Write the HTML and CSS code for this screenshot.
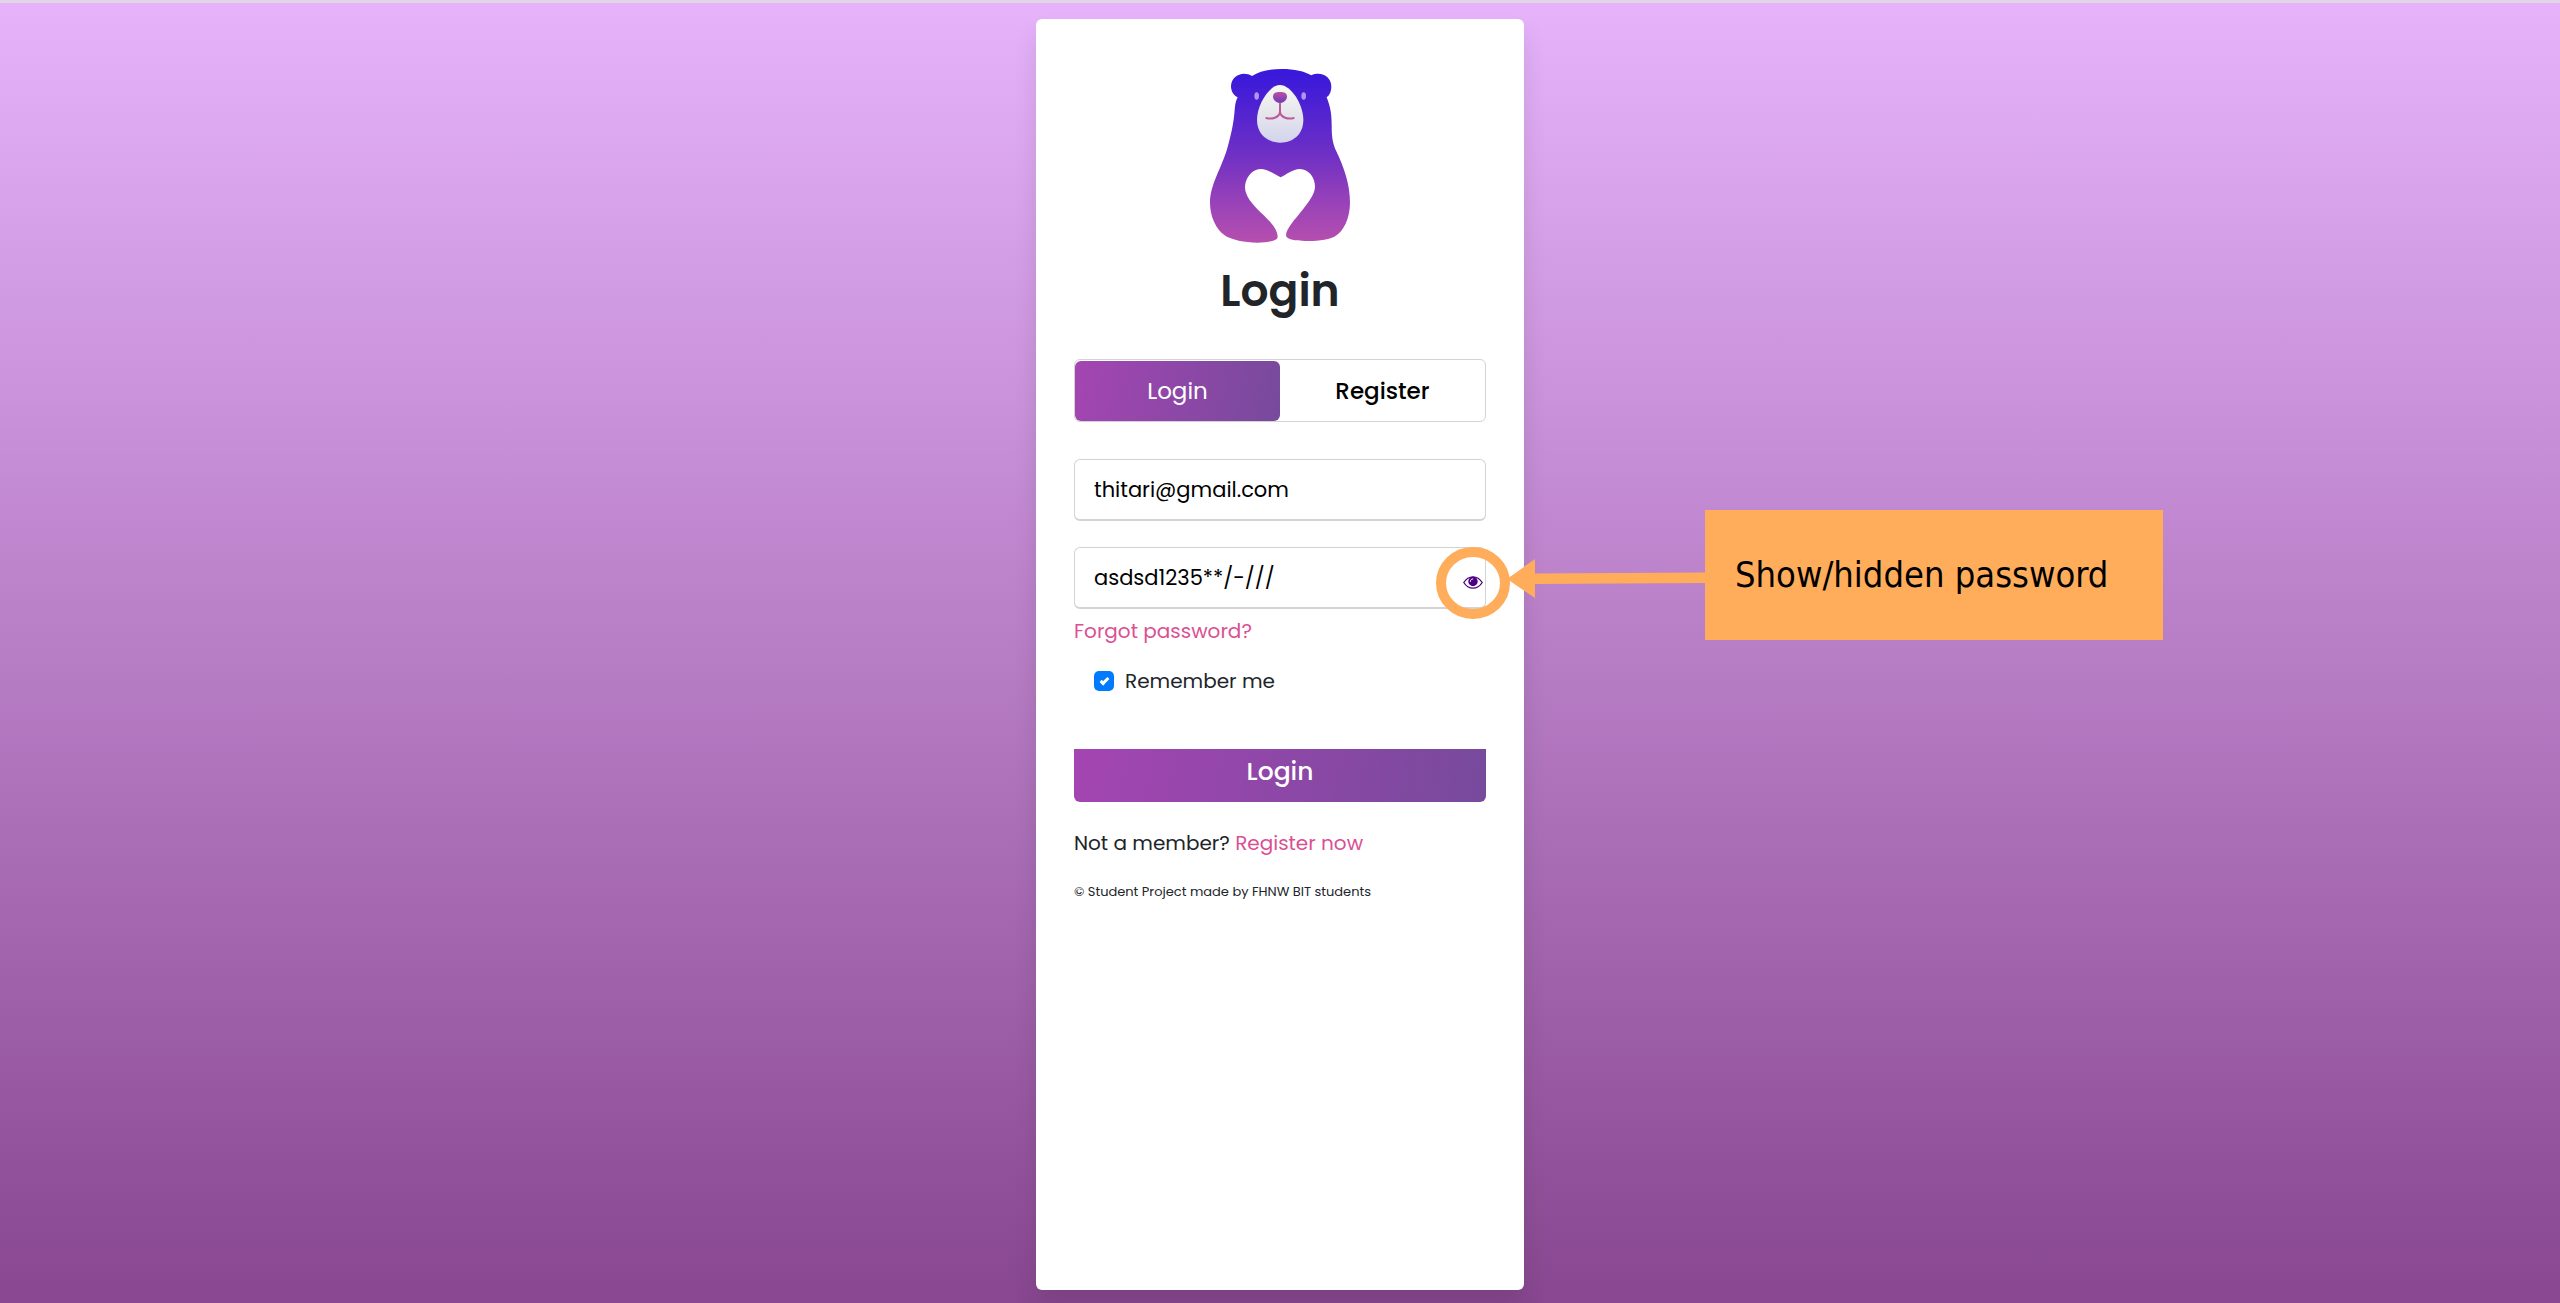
FILE: index.html
```html
<!DOCTYPE html>
<html lang="en">
<head>
<meta charset="utf-8">
<meta name="viewport" content="width=device-width, initial-scale=1">
<title>Login</title>
<link rel="stylesheet" href="styles.css">
</head>
<body>
<main class="page">
  <section class="card">
    <svg class="logo" viewBox="90 57 420 522" role="img" aria-label="Bear logo">
      <defs>
        <linearGradient id="fur" x1="0" y1="57" x2="0" y2="578" gradientUnits="userSpaceOnUse">
          <stop offset="0" stop-color="#3718dc"/>
          <stop offset="0.18" stop-color="#4a20d4"/>
          <stop offset="0.5" stop-color="#7030c4"/>
          <stop offset="0.75" stop-color="#9641b9"/>
          <stop offset="1" stop-color="#b64fae"/>
        </linearGradient>
        <linearGradient id="face" x1="0" y1="0" x2="0" y2="1">
          <stop offset="0" stop-color="#f8f8f4"/>
          <stop offset="0.5" stop-color="#e5e6ec"/>
          <stop offset="1" stop-color="#d3d4ec"/>
        </linearGradient>
        <linearGradient id="nose" x1="0" y1="0" x2="0" y2="1">
          <stop offset="0" stop-color="#b8529f"/>
          <stop offset="1" stop-color="#7238bd"/>
        </linearGradient>
      </defs>
      <path fill="url(#fur)" d="M216 78C238 64 266 57 305 57C344 57 374 64 394 76C424 63 454 80 454 110C454 124 449 135 440 142C452 172 455 195 455 225C455 262 458 281 470 306C493 354 510 405 510 458C510 505 490 546 463 560C440 571 405 573 375 573C350 573 318 569 318 556C318 536 345 508 368 479C388 453 405 430 405 410C405 382 386 357 360 357C338 357 318 374 302 382C285 374 264 357 241 357C215 357 195 386 195 412C195 437 216 463 243 488C269 512 293 537 293 560C293 574 258 578 232 578C195 578 153 570 134 556C107 536 90 498 90 458C90 403 125 355 143 291C155 247 161 219 164 180C165 163 168 151 173 142C161 137 153 124 153 109C153 78 188 61 216 78Z"/>
      <path fill="url(#face)" d="M300 105C268 105 231 163 231 210C231 252 262 278 301 278C341 278 370 251 370 210C370 163 333 105 300 105Z"/>
      <path fill="url(#nose)" d="M300 126C314 126 321 130 321 140C321 150 309 159 300 159C291 159 279 150 279 140C279 130 286 126 300 126Z"/>
      <path fill="none" stroke="#c05a98" stroke-width="6" stroke-linecap="round" d="M300 160V188M300 186C297 203 276 209 259 204M300 186C303 203 324 209 341 204"/>
      <ellipse cx="230" cy="138" rx="7" ry="11" fill="#b495ed"/>
      <ellipse cx="371" cy="138" rx="7" ry="11" fill="#b495ed"/>
    </svg>
    <h1 class="title">Login</h1>

    <div class="tabs">
      <button class="tab tab-active" type="button">Login</button>
      <button class="tab" type="button">Register</button>
    </div>

    <form class="form">
      <div class="field">
        <input class="input" type="text" value="thitari@gmail.com" aria-label="Email">
      </div>
      <div class="field">
        <input class="input" type="text" value="asdsd1235**/-///" aria-label="Password">
        <button class="eye" type="button" aria-label="Show or hide password">
          <svg class="eye-icon" viewBox="0 0 20 13">
            <path fill="#fff" stroke="#4b0082" stroke-width="1.3" d="M.8 6.5C3 3 6.200.8 10 .8S17 3 19.200 6.500C17 10 13.800 12.200 10 12.200S3 10 .8 6.500Z"/>
            <circle cx="10" cy="5.500" r="4.700" fill="#4b0082"/>
            <path fill="none" stroke="#fff" stroke-width="1" stroke-linecap="round" d="M7.300 5.500C7.300 4 8.400 2.900 9.800 2.900"/>
          </svg>
        </button>
        <svg class="pointer" viewBox="0 0 270 72" aria-hidden="true">
          <ellipse cx="38" cy="36" rx="32" ry="31" fill="none" stroke="#ffad5b" stroke-width="10"/>
          <path fill="#ffad5b" d="M72 32L100 12V26.500L270 25.500V36L100 37V51Z"/>
        </svg>
        <div class="callout">Show/hidden password</div>
      </div>
      <a class="link forgot" href="#">Forgot password?</a>
      <label class="remember">
        <input class="check" type="checkbox" checked>
        <span>Remember me</span>
      </label>
      <button class="submit" type="submit">Login</button>
      <p class="signup">Not a member? <a class="link" href="#">Register now</a></p>
    </form>
    <p class="copyright">© Student Project made by FHNW BIT students</p>
  </section>
</main>
</body>
</html>
```
FILE: styles.css
```css
* {
  box-sizing: border-box;
}

body {
  margin: 0;
  color: #212529;
  font-family: Poppins, Inter, sans-serif;
  font-size: 20px;
  line-height: 24px;
}

button,
input {
  margin: 0;
  font: inherit;
}

.page {
  display: flex;
  justify-content: center;
  min-height: 100vh;
  padding: 16px 16px 13px;
  overflow: hidden;
  border-top: 3px solid #dfd5e5;
  background: linear-gradient(#e6b3fb, #884790);
}

.card {
  width: 100%;
  max-width: 488px;
  padding: 50px 38px;
  border-radius: 6px;
  background: #fff;
  box-shadow: 0 16px 24px rgba(0, 0, 0, 0.1);
}

.logo {
  display: block;
  width: 140px;
  height: 174px;
  margin: 0 auto 18px;
}

.title {
  margin: 0 0 38px;
  font-size: 44px;
  font-weight: 600;
  line-height: 60px;
  text-align: center;
}

.tabs {
  display: flex;
  height: 63px;
  margin-bottom: 37px;
  padding-top: 1px;
  border: 1px solid lightgrey;
  border-radius: 6px;
}

.tab {
  flex: 1;
  padding: 0;
  border: 0;
  border-radius: 6px;
  background: none;
  color: #000;
  font-size: 23px;
  font-weight: 500;
}

.tab-active {
  background: linear-gradient(100deg, #a445b2, #774a9c);
  color: #fff;
  font-weight: 400;
}

.field {
  position: relative;
  margin-bottom: 26px;
}

.field + .field {
  margin-bottom: 10px;
}

.input {
  display: block;
  width: 100%;
  height: 62px;
  padding: 0 19px;
  border: 1px solid lightgrey;
  border-bottom-width: 2px;
  border-radius: 6px;
  background: #fff;
  color: #000;
  font-size: 21px;
}

.eye {
  position: absolute;
  top: 29px;
  right: 3px;
  padding: 0;
  border: 0;
  background: none;
}

.eye-icon {
  display: block;
  width: 20px;
  height: 13px;
}

.pointer {
  position: absolute;
  top: 0;
  left: calc(100% - 51px);
  width: 270px;
  height: 72px;
  pointer-events: none;
}

.callout {
  position: absolute;
  top: -37px;
  left: calc(100% + 219px);
  width: 458px;
  padding: 41px 30px;
  background: #ffad5b;
  color: #000;
  font-family: Tahoma, "DejaVu Sans Condensed", "Noto Sans", sans-serif;
  font-size: 36px;
  line-height: 48px;
  white-space: nowrap;
}

.link {
  color: #db4f93;
  text-decoration: none;
}

.forgot {
  display: block;
}

.remember {
  display: flex;
  gap: 11px;
  align-items: center;
  margin: 26px 0 56px 20px;
}

.check {
  display: grid;
  width: 20px;
  height: 20px;
  padding-bottom: 2px;
  place-items: center;
  border-radius: 5px;
  background: #007bff;
  appearance: none;
}

.check::before {
  width: 6px;
  height: 2px;
  border: solid #fff;
  border-width: 0 0 3px 3px;
  content: "";
  transform: rotate(-45deg);
}

.submit {
  display: block;
  width: 100%;
  height: 53px;
  padding: 0 0 8px;
  border: 0;
  border-radius: 0 0 6px 6px;
  background: linear-gradient(100deg, #a445b2, #774a9c);
  color: #fff;
  font-size: 25px;
  font-weight: 500;
}

.signup {
  margin: 29px 0;
}

.copyright {
  margin: 0;
  font-size: 13px;
  line-height: 16px;
}
```
